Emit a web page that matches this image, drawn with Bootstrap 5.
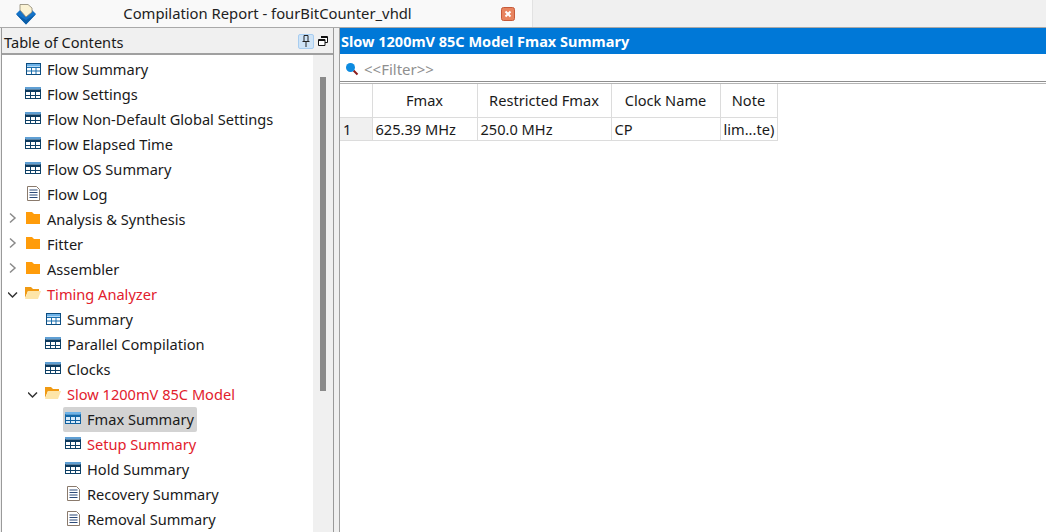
<!DOCTYPE html>
<html lang="en">
<head>
  <meta charset="UTF-8">
  <title>Compilation Report - fourBitCounter_vhdl</title>
  <link href="https://cdn.jsdelivr.net/npm/bootstrap@5.3.0/dist/css/bootstrap.min.css" rel="stylesheet">
  <style>
    html, body { height: 100%; }
    body { width: 1046px; height: 532px; overflow: hidden; background: #f0f0f0; color: #1a1a1a; font-family: "Noto Sans", sans-serif; font-size: 14.6px; }
    .top-strip { height: 28px; border-bottom: 1px solid #a9a9a9; }
    .report-tab { width: 533px; height: 27px; background: #f9f9f9; border-right: 1px solid #e2e2e2; padding-left: 16px; }
    .report-title { width: 461px; flex: none; text-align: center; padding-left: 2px; color: #222; font-size: 14.8px; }
    .main-area { height: 504px; }
    .toc-pane { width: 333px; border-left: 1px solid #9a9a9a; border-right: 1px solid #9a9a9a; margin-left: 1px; background: #fff; }
    .toc-head { height: 27px; background: #f0f0f0; border-bottom: 2px solid #a0a0a0; padding: 4px 5px 0 2px; }
    .head-tools { margin-bottom: 3px; }
    .pin-btn { width: 16px; height: 15px; background: #cfe4f7; border: 1px solid #a8cdf0; border-radius: 2px; }
    .toc-body { height: 477px; }
    .toc-tree { width: 311px; padding-top: 2px; }
    .toc-row { height: 25px; white-space: nowrap; }
    .lvl-0 { padding-left: 6px; }
    .lvl-1 { padding-left: 26px; }
    .leaf-0 { padding-left: 21px; }
    .leaf-1 { padding-left: 41px; }
    .leaf-2 { padding-left: 61px; }
    .arrow-box { width: 15px; height: 20px; flex: none; }
    .ico-box { width: 20px; height: 20px; flex: none; margin-right: 3px; }
    .toc-label { padding: 0 1px; line-height: 23px; }
    .toc-label.picked { background: #d3d3d3; border-radius: 2px; line-height: 25px; padding: 0 3px 0 24px; margin-left: -23px; }
    .picked-ico { position: relative; z-index: 1; }
    .text-alert { color: #e2202c; }
    .toc-scroll { width: 20px; background: #f0f0f0; padding-left: 7px; padding-top: 22px; }
    .toc-thumb { width: 6px; height: 314px; background: #8a8a8a; }
    .pane-gap { width: 5px; background: #f0f0f0; }
    .detail-pane { background: #fff; border-left: 1px solid #a0a0a0; }
    .detail-bar { height: 26px; background: #0078d7; color: #fff; font-weight: 700; font-size: 14.5px; padding: 2px 0 0 1px; }
    .filter-bar { height: 28px; padding: 3px 0 0 5px; color: #8f8f8f; font-size: 15px; border-bottom: 1px solid #8e8e8e; gap: 5px; }
    .filter-rule { height: 2px; border-bottom: 1px solid #b5b5b5; }
    .fmax-table { border-collapse: collapse; table-layout: fixed; width: 437px; }
    .fmax-table th, .fmax-table td { border: 1px solid #dcdcdc; border-top: 0; font-weight: 400; padding: 0 3px; white-space: nowrap; }
    .fmax-table th { height: 33px; text-align: center; padding-top: 2px; }
    .fmax-table td { height: 23px; padding-top: 1px; }
    .fmax-table th:first-child, .fmax-table td:first-child { border-left: 0; }
    .fmax-table td:first-child { background: #f0f0f0; }
    .col-num { width: 32px; }
    .col-fmax { width: 105px; }
    .col-restricted { width: 134px; }
    .col-clock { width: 109px; }
    .col-note { width: 57px; }
  </style>
</head>
<body>
  <svg width="0" height="0" class="position-absolute">
    <symbol id="i-grid" viewBox="0 0 20 20">
      <rect x="3.500" y="3.500" width="14" height="11" fill="#fff" stroke="#0d4d80"/>
      <rect x="4" y="4" width="13" height="2.500" fill="#6cb2e8"/>
      <path d="M4 7.500h13M4 11h13M8.500 7v7M13 7v7" stroke="#1b6fae" fill="none"/>
    </symbol>
    <symbol id="i-table" viewBox="0 0 20 20">
      <rect x="2.500" y="2.500" width="15" height="11" fill="#fff" stroke="#0d4066"/>
      <rect x="2" y="2" width="16" height="2.500" fill="#5f9fd4"/>
      <rect x="2" y="4.500" width="16" height="2.500" fill="#0d3b60"/>
      <path d="M2 10.500h16M7.500 7v7M12.500 7v7" stroke="#0d4066" fill="none"/>
    </symbol>
    <symbol id="i-table-sel" viewBox="0 0 20 20">
      <rect x="2.500" y="2.500" width="15" height="11" fill="#d8ebfa" stroke="#0f5f9e"/>
      <rect x="2" y="2" width="16" height="2.500" fill="#6cb2e8"/>
      <rect x="2" y="4.500" width="16" height="2.500" fill="#1468a8"/>
      <path d="M2 10.500h16M7.500 7v7M12.500 7v7" stroke="#0f5f9e" fill="none"/>
    </symbol>
    <symbol id="i-doc" viewBox="0 0 20 20">
      <path d="M4.500 1.500h9l3 3v11h-12z" fill="#fff" stroke="#8a7a6c"/>
      <path d="M6.500 5h8M6.500 7.500h8M6.500 10h8M6.500 12.500h8" stroke="#2c4a78" fill="none"/>
    </symbol>
    <symbol id="i-folder" viewBox="0 0 20 20">
      <path d="M3 2h6l2 2h6v10H3z" fill="#ff9c0a"/>
    </symbol>
    <symbol id="i-open" viewBox="0 0 20 20">
      <path d="M2 2h6l2 2h6v2H5l-3 7z" fill="#f09a13"/>
      <path d="M5 6h13l-3 8H2z" fill="#fde5a8"/>
    </symbol>
    <symbol id="i-right" viewBox="0 0 15 20"><path d="M2 3.500l5 4.500-5 4.500" fill="none" stroke="#8a8a8a" stroke-width="1.500"/></symbol>
    <symbol id="i-down" viewBox="0 0 15 20"><path d="M0 7.500l4.500 4.500 4.500-4.500" fill="none" stroke="#333" stroke-width="1.500"/></symbol>
  </svg>

  <div class="top-strip">
    <div class="report-tab d-flex align-items-center">
      <svg width="20" height="22" viewBox="0 0 20 22" class="flex-shrink-0">
        <path d="M0 11l4-4 6 5 6-5 4 4-10 10.500z" fill="#1573c8"/>
        <path d="M4 7V1.500h8l4 3.500v4l-6 5z" fill="#fbf3d4" stroke="#8d8672" stroke-width=".8"/>
        <path d="M0 11l10 10.500L20 11l-10 6z" fill="#0b5ea8"/>
      </svg>
      <div class="report-title">Compilation Report - fourBitCounter_vhdl</div>
      <svg width="14" height="14" viewBox="0 0 14 14" class="ms-1 flex-shrink-0">
        <rect x=".5" y=".5" width="13" height="13" rx="2" fill="#e8845f" stroke="#c65a3a"/>
        <path d="M4.500 4.500l5 5M9.500 4.500l-5 5" stroke="#fff" stroke-width="2"/>
      </svg>
    </div>
  </div>

  <div class="main-area d-flex">
    <div class="toc-pane d-flex flex-column">
      <div class="toc-head d-flex align-items-center">
        <div class="flex-grow-1">Table of Contents</div>
        <div class="head-tools d-flex align-items-center">
          <div class="pin-btn d-flex align-items-center justify-content-center me-1">
            <svg width="8" height="12" viewBox="0 0 8 12"><path d="M2 .5h4v6H2zM.5 6.500h7M4 7v5" fill="none" stroke="#222"/></svg>
          </div>
          <svg width="10" height="10" viewBox="0 0 10 10"><path d="M3 .5h6.500v6H7M.5 3.500H7v6H.5z" fill="#fff" stroke="#111"/><path d="M3 1.500h6.500M.5 4.500H7" stroke="#111"/></svg>
        </div>
      </div>
      <div class="toc-body d-flex overflow-hidden">
        <div class="toc-tree">
          <div class="toc-row d-flex align-items-center leaf-0"><svg class="ico-box"><use href="#i-grid"/></svg><span class="toc-label">Flow Summary</span></div>
          <div class="toc-row d-flex align-items-center leaf-0"><svg class="ico-box"><use href="#i-table"/></svg><span class="toc-label">Flow Settings</span></div>
          <div class="toc-row d-flex align-items-center leaf-0"><svg class="ico-box"><use href="#i-table"/></svg><span class="toc-label">Flow Non-Default Global Settings</span></div>
          <div class="toc-row d-flex align-items-center leaf-0"><svg class="ico-box"><use href="#i-table"/></svg><span class="toc-label">Flow Elapsed Time</span></div>
          <div class="toc-row d-flex align-items-center leaf-0"><svg class="ico-box"><use href="#i-table"/></svg><span class="toc-label">Flow OS Summary</span></div>
          <div class="toc-row d-flex align-items-center leaf-0"><svg class="ico-box"><use href="#i-doc"/></svg><span class="toc-label">Flow Log</span></div>
          <div class="toc-row d-flex align-items-center lvl-0"><svg class="arrow-box"><use href="#i-right"/></svg><svg class="ico-box"><use href="#i-folder"/></svg><span class="toc-label">Analysis &amp; Synthesis</span></div>
          <div class="toc-row d-flex align-items-center lvl-0"><svg class="arrow-box"><use href="#i-right"/></svg><svg class="ico-box"><use href="#i-folder"/></svg><span class="toc-label">Fitter</span></div>
          <div class="toc-row d-flex align-items-center lvl-0"><svg class="arrow-box"><use href="#i-right"/></svg><svg class="ico-box"><use href="#i-folder"/></svg><span class="toc-label">Assembler</span></div>
          <div class="toc-row d-flex align-items-center lvl-0"><svg class="arrow-box"><use href="#i-down"/></svg><svg class="ico-box"><use href="#i-open"/></svg><span class="toc-label text-alert">Timing Analyzer</span></div>
          <div class="toc-row d-flex align-items-center leaf-1"><svg class="ico-box"><use href="#i-grid"/></svg><span class="toc-label">Summary</span></div>
          <div class="toc-row d-flex align-items-center leaf-1"><svg class="ico-box"><use href="#i-table"/></svg><span class="toc-label">Parallel Compilation</span></div>
          <div class="toc-row d-flex align-items-center leaf-1"><svg class="ico-box"><use href="#i-table"/></svg><span class="toc-label">Clocks</span></div>
          <div class="toc-row d-flex align-items-center lvl-1"><svg class="arrow-box"><use href="#i-down"/></svg><svg class="ico-box"><use href="#i-open"/></svg><span class="toc-label text-alert">Slow 1200mV 85C Model</span></div>
          <div class="toc-row d-flex align-items-center leaf-2"><svg class="ico-box picked-ico"><use href="#i-table-sel"/></svg><span class="toc-label picked">Fmax Summary</span></div>
          <div class="toc-row d-flex align-items-center leaf-2"><svg class="ico-box"><use href="#i-table"/></svg><span class="toc-label text-alert">Setup Summary</span></div>
          <div class="toc-row d-flex align-items-center leaf-2"><svg class="ico-box"><use href="#i-table"/></svg><span class="toc-label">Hold Summary</span></div>
          <div class="toc-row d-flex align-items-center leaf-2"><svg class="ico-box"><use href="#i-doc"/></svg><span class="toc-label">Recovery Summary</span></div>
          <div class="toc-row d-flex align-items-center leaf-2"><svg class="ico-box"><use href="#i-doc"/></svg><span class="toc-label">Removal Summary</span></div>
        </div>
        <div class="toc-scroll"><div class="toc-thumb"></div></div>
      </div>
    </div>
    <div class="pane-gap"></div>
    <div class="detail-pane flex-grow-1">
      <div class="detail-bar d-flex align-items-center">Slow 1200mV 85C Model Fmax Summary</div>
      <div class="filter-bar d-flex align-items-center">
        <svg width="14" height="14" viewBox="0 0 14 14"><path d="M8.500 8.500l4 4" stroke="#8b1a1a" stroke-width="2"/><circle cx="5.500" cy="5.500" r="4.500" fill="#0d8be0"/></svg>
        <span>&lt;&lt;Filter&gt;&gt;</span>
      </div>
      <div class="filter-rule"></div>
      <table class="fmax-table">
        <colgroup><col class="col-num"><col class="col-fmax"><col class="col-restricted"><col class="col-clock"><col class="col-note"></colgroup>
        <tr><th></th><th>Fmax</th><th>Restricted Fmax</th><th>Clock Name</th><th>Note</th></tr>
        <tr><td>1</td><td>625.39 MHz</td><td>250.0 MHz</td><td>CP</td><td>lim...te)</td></tr>
      </table>
    </div>
  </div>
  <script src="https://cdn.jsdelivr.net/npm/bootstrap@5.3.0/dist/js/bootstrap.bundle.min.js"></script>
</body>
</html>
